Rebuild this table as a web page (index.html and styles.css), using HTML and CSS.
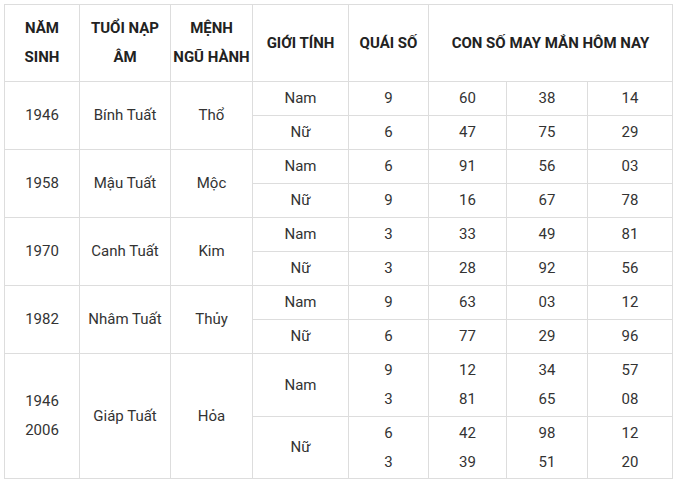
FILE: index.html
```html
<!DOCTYPE html>
<html lang="vi">
<head>
<meta charset="utf-8">
<title>Con số may mắn</title>
<link rel="stylesheet" href="styles.css">
</head>
<body>
<table class="lucky">
  <colgroup>
    <col class="c1"><col class="c2"><col class="c3"><col class="c4"><col class="c5"><col class="c6"><col class="c7"><col class="c8">
  </colgroup>
  <thead>
    <tr class="head">
      <th>NĂM<br>SINH</th>
      <th>TUỔI NẠP<br>ÂM</th>
      <th>MỆNH<br>NGŨ HÀNH</th>
      <th>GIỚI TÍNH</th>
      <th>QUÁI SỐ</th>
      <th colspan="3">CON SỐ MAY MẮN HÔM NAY</th>
    </tr>
  </thead>
  <tbody>
    <tr class="sub"><td rowspan="2">1946</td><td rowspan="2">Bính Tuất</td><td rowspan="2">Thổ</td><td>Nam</td><td>9</td><td>60</td><td>38</td><td>14</td></tr>
    <tr class="sub"><td>Nữ</td><td>6</td><td>47</td><td>75</td><td>29</td></tr>
    <tr class="sub"><td rowspan="2">1958</td><td rowspan="2">Mậu Tuất</td><td rowspan="2">Mộc</td><td>Nam</td><td>6</td><td>91</td><td>56</td><td>03</td></tr>
    <tr class="sub"><td>Nữ</td><td>9</td><td>16</td><td>67</td><td>78</td></tr>
    <tr class="sub"><td rowspan="2">1970</td><td rowspan="2">Canh Tuất</td><td rowspan="2">Kim</td><td>Nam</td><td>3</td><td>33</td><td>49</td><td>81</td></tr>
    <tr class="sub"><td>Nữ</td><td>3</td><td>28</td><td>92</td><td>56</td></tr>
    <tr class="sub"><td rowspan="2">1982</td><td rowspan="2">Nhâm Tuất</td><td rowspan="2">Thủy</td><td>Nam</td><td>9</td><td>63</td><td>03</td><td>12</td></tr>
    <tr class="sub"><td>Nữ</td><td>6</td><td>77</td><td>29</td><td>96</td></tr>
    <tr class="dbl"><td rowspan="2">1946<br>2006</td><td rowspan="2">Giáp Tuất</td><td rowspan="2">Hỏa</td><td>Nam</td><td>9<br>3</td><td>12<br>81</td><td>34<br>65</td><td>57<br>08</td></tr>
    <tr class="dbl2"><td>Nữ</td><td>6<br>3</td><td>42<br>39</td><td>98<br>51</td><td>12<br>20</td></tr>
  </tbody>
</table>
</body>
</html>
```
FILE: styles.css
```css
html, body {
  margin: 0;
  padding: 0;
  background: #ffffff;
}
body {
  padding: 4px 0 0 4px;
  font-family: Roboto, "Liberation Sans", Arial, sans-serif;
  color: #333333;
}
.lucky {
  border-collapse: collapse;
  table-layout: fixed;
  width: 669px;
  font-size: 15px;
}
.c1 { width: 75px; }
.c2 { width: 91px; }
.c3 { width: 82px; }
.c4 { width: 96px; }
.c5 { width: 80px; }
.c6 { width: 78px; }
.c7 { width: 81px; }
.c8 { width: 85px; }
.lucky th,
.lucky td {
  border: 1px solid #dddddd;
  text-align: center;
  vertical-align: middle;
  padding: 0;
  line-height: 29px;
}
.lucky th {
  font-weight: 700;
  color: #222222;
}
.head { height: 77px; }
.sub { height: 34px; }
.dbl { height: 63px; }
.dbl2 { height: 62px; }
```
